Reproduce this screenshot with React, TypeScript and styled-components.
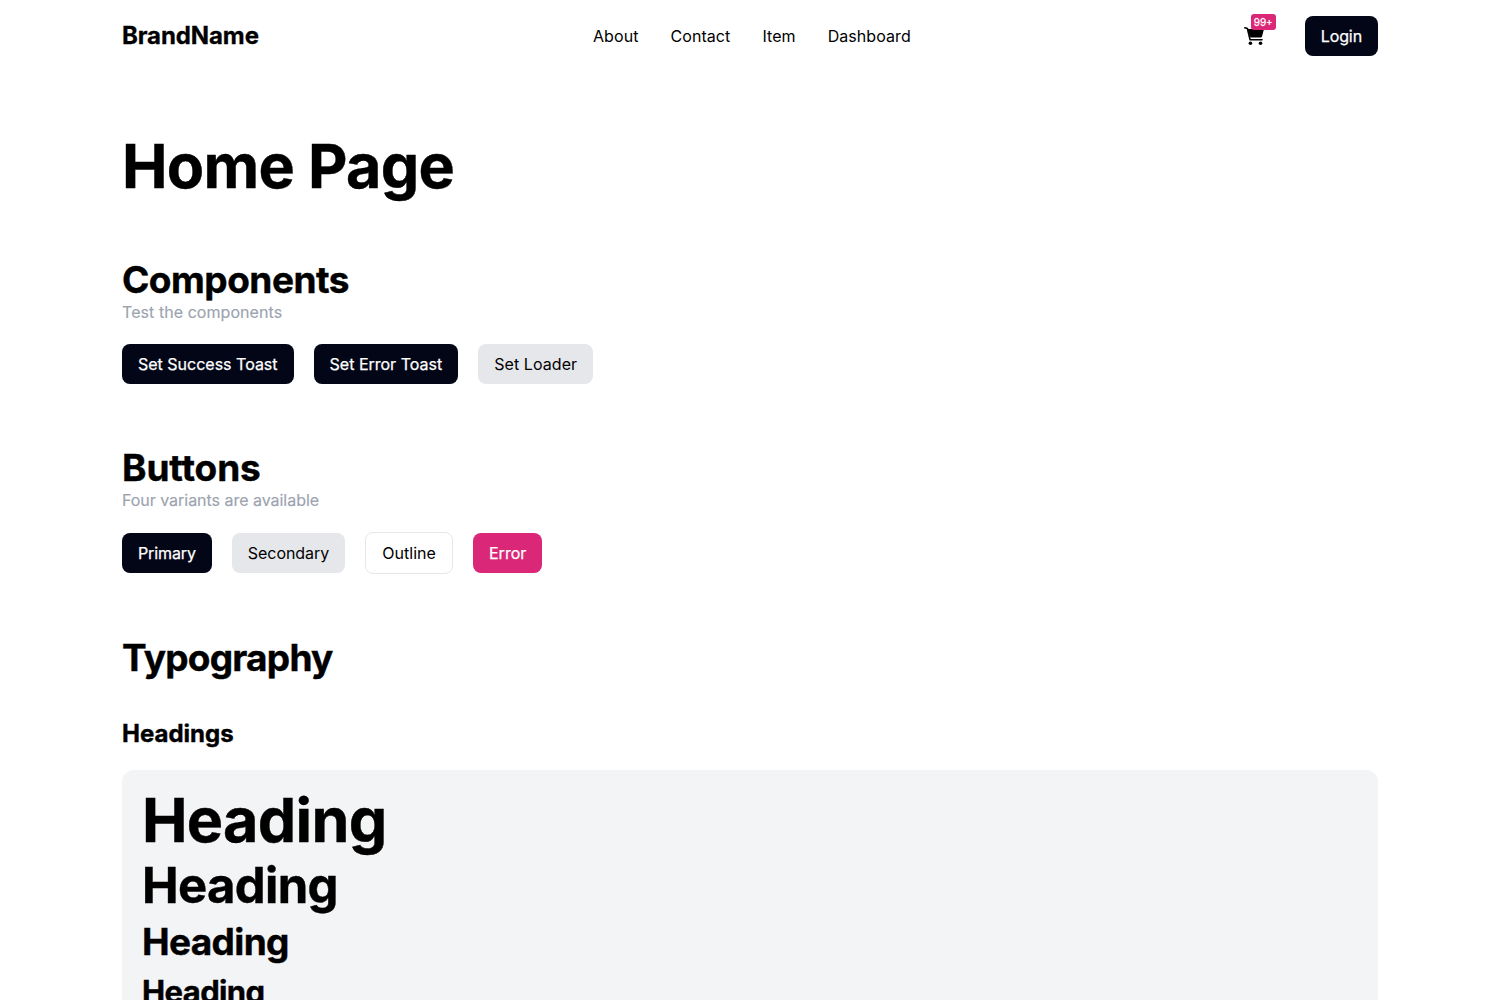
import React from "react";
import styled, { createGlobalStyle, css } from "styled-components";

const Global = createGlobalStyle`
  *, *::before, *::after { box-sizing: border-box; }
  html, body { margin: 0; height: 100%; }
  body { height: 1000px; overflow: hidden; background: #fff; color: #000; font-family: Inter, sans-serif; font-size: 16px; line-height: 24px; -webkit-font-smoothing: antialiased; }
  h1, h2, h3, h4, p { margin: 0; }
`;

const Container = styled.div`
  width: 1256px;
  margin: 0 auto;
`;

const Header = styled.header`
  height: 72px;
  display: flex;
  align-items: center;
  justify-content: space-between;
`;

const Brand = styled.div`
  width: 471px;
  font-size: 24px;
  font-weight: 700;
  line-height: 32px;
  letter-spacing: -0.1px;
  -webkit-text-stroke: 0.3px currentColor;
`;

const Nav = styled.nav`
  display: flex;
  gap: 32px;
  letter-spacing: 0.07px;
`;

const NavLink = styled.a`
  color: #000;
`;

const Actions = styled.div`
  flex: 1;
  display: flex;
  align-items: center;
  justify-content: flex-end;
  gap: 39px;
`;

const Cart = styled.div`
  position: relative;
  display: flex;
`;

const Badge = styled.span`
  position: absolute;
  left: 9px;
  top: -10px;
  width: 25px;
  height: 16px;
  text-align: center;
  border-radius: 3px;
  background: #db2777;
  color: #fff;
  font-size: 10px;
  line-height: 16px;
  -webkit-text-stroke: 0.25px currentColor;
`;

type Variant = "primary" | "secondary" | "outline" | "error";

const variants = {
  primary: css`background: #030617; color: #fff; -webkit-text-stroke: 0.25px currentColor;`,
  secondary: css`background: #e5e7eb; color: #000;`,
  outline: css`background: #fff; color: #000; border: 1px solid #e5e7eb;`,
  error: css`background: #db2777; color: #fff; -webkit-text-stroke: 0.25px currentColor;`,
};

const Button = styled.button<{ $variant?: Variant; $tracking?: number }>`
  border: 0;
  border-radius: 8px;
  padding: 8px 16px;
  font: inherit;
  white-space: nowrap;
  letter-spacing: ${({ $tracking = 0 }) => $tracking}px;
  ${({ $variant = "primary" }) => variants[$variant]}
`;

const Title = styled.h1<{ $size: number; $line: number; $tracking?: number }>`
  font-size: ${({ $size }) => $size}px;
  line-height: ${({ $line }) => $line}px;
  font-weight: 700;
  letter-spacing: ${({ $tracking = 0 }) => $tracking}px;
  -webkit-text-stroke: 0.4px currentColor;
`;

const Section = styled.section<{ $top: number }>`
  margin-top: ${({ $top }) => $top}px;
`;

const Subtitle = styled.p<{ $tracking?: number }>`
  color: #9ca3af;
  letter-spacing: ${({ $tracking = 0 }) => $tracking}px;
  -webkit-text-stroke: 0.15px currentColor;
`;

const ButtonRow = styled.div`
  display: flex;
  align-items: center;
  gap: 20px;
  margin-top: 20px;
`;

const SubHeading = styled.div`
  margin-top: 38px;
`;

const Panel = styled.div`
  margin-top: 18px;
  padding: 20px;
  border-radius: 12px;
  background: #f3f4f6;
`;

function CartIcon() {
  return (
    <svg width="24" height="24" viewBox="0 0 24 24" aria-hidden="true">
      <path d="M2.8 3.8 5.4 4.5 8.1 15.8H20" fill="none" stroke="#000" strokeWidth="1.6" strokeLinecap="round" strokeLinejoin="round" />
      <path d="M5.5 5H22L20 12.6Q19.7 13.6 18.7 13.6H8.5Z" fill="#000" />
      <circle cx="8.4" cy="19.3" r="1.8" fill="#000" />
      <circle cx="18.5" cy="19.3" r="1.8" fill="#000" />
    </svg>
  );
}

export default function App() {
  return (
    <>
      <Global />
      <Container>
        <Header>
          <Brand>BrandName</Brand>
          <Nav>
            {["About", "Contact", "Item", "Dashboard"].map((label) => (
              <NavLink key={label}>{label}</NavLink>
            ))}
          </Nav>
          <Actions>
            <Cart>
              <CartIcon />
              <Badge>99+</Badge>
            </Cart>
            <Button $tracking={-0.1}>Login</Button>
          </Actions>
        </Header>
        <Section $top={64}>
          <Title $size={61} $line={60} $tracking={-0.7}>Home Page</Title>
        </Section>
        <Section $top={64}>
          <Title as="h2" $size={37} $line={40} $tracking={-0.5}>Components</Title>
          <Subtitle $tracking={0.06}>Test the components</Subtitle>
          <ButtonRow>
            <Button>Set Success Toast</Button>
            <Button>Set Error Toast</Button>
            <Button $variant="secondary" $tracking={0.08}>Set Loader</Button>
          </ButtonRow>
        </Section>
        <Section $top={64}>
          <Title as="h2" $size={37} $line={40} $tracking={-0.1}>Buttons</Title>
          <Subtitle $tracking={-0.03}>Four variants are available</Subtitle>
          <ButtonRow>
            <Button $tracking={-0.12}>Primary</Button>
            <Button $variant="secondary" $tracking={-0.05}>Secondary</Button>
            <Button $variant="outline" $tracking={0.05}>Outline</Button>
            <Button $variant="error">Error</Button>
          </ButtonRow>
        </Section>
        <Section $top={64}>
          <Title as="h2" $size={37} $line={40} $tracking={-0.75}>Typography</Title>
          <SubHeading>
            <Title as="h3" $size={24} $line={36}>Headings</Title>
          </SubHeading>
          <Panel>
            <Title $size={61} $line={61} $tracking={-0.7}>Heading</Title>
            <Title as="h2" $size={49} $line={70} $tracking={-0.65}>Heading</Title>
            <Title as="h3" $size={37} $line={41} $tracking={-0.65}>Heading</Title>
            <Title as="h4" $size={31} $line={60} $tracking={-0.6}>Heading</Title>
          </Panel>
        </Section>
      </Container>
    </>
  );
}
